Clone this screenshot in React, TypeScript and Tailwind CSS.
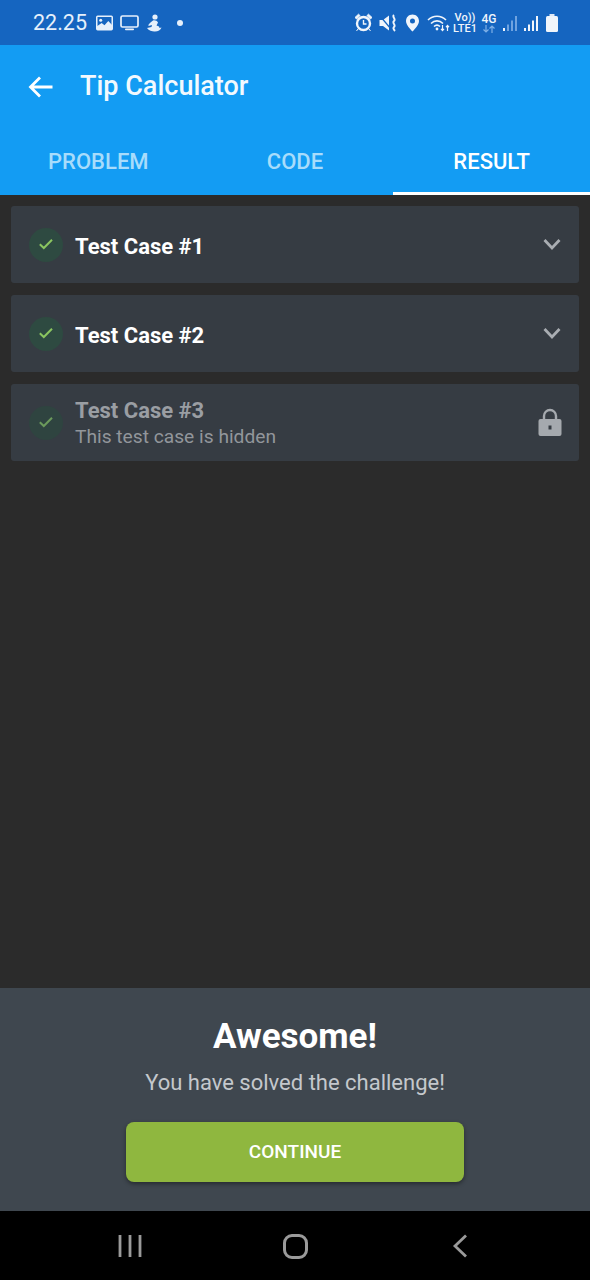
import React from "react";

const font = { fontFamily: "Roboto, sans-serif" };

function Check({ dim }: { dim?: boolean }) {
  return (
    <div className={`flex h-[34px] w-[34px] shrink-0 items-center justify-center rounded-full ${dim ? "bg-[#2f4440]" : "bg-[#2e4a41]"}`}>
      <svg width="16" height="12" viewBox="0 0 16 12" fill="none" className="mb-[2px]">
        <path d="M1.8 6.2 L5.8 10 L14 1.8" stroke={dim ? "#6c9a5c" : "#8bc560"} strokeWidth="2" />
      </svg>
    </div>
  );
}

function Chevron() {
  return (
    <svg width="18" height="13" viewBox="0 0 18 13" fill="none" className="mr-[18px]">
      <path d="M1.5 2 L9 10 L16.5 2" stroke="#a9adb2" strokeWidth="2.8" />
    </svg>
  );
}

function Lock() {
  return (
    <svg width="24" height="28" viewBox="0 0 24 28" className="mr-[17px] mb-[2px]">
      <path d="M6 12 V8 a6 6 0 0 1 12 0 V12" fill="none" stroke="#a5a9ae" strokeWidth="2.4" />
      <rect x="0.5" y="11" width="23" height="17" rx="2" fill="#a5a9ae" />
      <rect x="10.5" y="17.5" width="3" height="4" fill="#363c43" />
    </svg>
  );
}

function TestCard({ title, dim, sub }: { title: string; dim?: boolean; sub?: string }) {
  return (
    <div className="flex h-[77px] items-center justify-between rounded-[3px] bg-[#363c43] pl-[18px]">
      <div className="flex items-center gap-[12px]">
        <Check dim={dim} />
        {sub ? (
          <div className="flex flex-col pt-[1px]">
            <span className="text-[22px] leading-[27px] font-bold text-[#9a9ea3]">{title}</span>
            <span className="text-[19.2px] leading-[25px] text-[#92969b]">{sub}</span>
          </div>
        ) : (
          <span className="pt-[3px] text-[22px] leading-[27px] font-bold text-white">{title}</span>
        )}
      </div>
      {dim ? <Lock /> : <Chevron />}
    </div>
  );
}

function LeftStatusIcons() {
  return (
    <div className="flex items-center">
      <svg width="17" height="16" viewBox="0 0 18 16" className="ml-[9px]">
        <rect x="0.8" y="0.8" width="16.4" height="14.4" rx="1" fill="none" stroke="#e6f0fb" strokeWidth="1.6" />
        <circle cx="5" cy="5" r="1.6" fill="#e6f0fb" />
        <path d="M1 15 V11.5 L6 8 L9 10.5 L13 6 L17 10 V15 Z" fill="#e6f0fb" />
      </svg>
      <svg width="19" height="16" viewBox="0 0 19 16" className="ml-[7px]">
        <rect x="1" y="1" width="17" height="11" rx="1.5" fill="none" stroke="#e6f0fb" strokeWidth="1.7" />
        <rect x="5" y="13.5" width="9" height="1.8" rx="0.8" fill="#e6f0fb" />
      </svg>
      <svg width="16" height="18" viewBox="0 0 16 18" className="ml-[7px]">
        <circle cx="9" cy="3" r="2.6" fill="#e6f0fb" />
        <path d="M7 6.5 C3.5 9 2 10.5 2.5 12 L6 11 L5.5 13 L1 14 C3 17 7 17.6 9 17.4 C12 17.4 14.6 16 15.5 13.5 L13.5 14 L13 12.5 L10.5 11.5 L12 8.5 C11 6.8 9 6 7 6.5 Z" fill="#e6f0fb" />
      </svg>
      <div className="ml-[15px] h-[6px] w-[6px] rounded-full bg-[#e6f0fb]" />
    </div>
  );
}

function RightStatusIcons() {
  return (
    <div className="flex items-center">
      <svg width="19" height="19" viewBox="0 0 19 19">
        <circle cx="9.5" cy="10.5" r="6.5" fill="none" stroke="#f0f5fb" strokeWidth="2.4" />
        <path d="M9.5 7 V11 H12.5" fill="none" stroke="#f0f5fb" strokeWidth="1.4" />
        <path d="M1 4.5 L4.5 1.2 L6 2.6 L2.6 6 Z M18 4.5 L14.5 1.2 L13 2.6 L16.4 6 Z M4 16 L2.5 18 M15 16 L16.5 18" fill="#f0f5fb" stroke="#f0f5fb" strokeWidth="1" />
      </svg>
      <svg width="19" height="18" viewBox="0 0 19 18" className="ml-[6px]">
        <path d="M0.5 6 H4 L10 1.5 V16.5 L4 12 H0.5 Z" fill="#f0f5fb" />
        <path d="M1 2 L12 15" stroke="#1565c0" strokeWidth="1.2" />
        <path d="M15 1 C12.5 3 17.5 5 15 7 C12.5 9 17.5 11 15 13 C13.5 14.5 15 16 16 17" fill="none" stroke="#f0f5fb" strokeWidth="1.9" />
      </svg>
      <svg width="15" height="18" viewBox="0 0 14 18" className="ml-[7px]">
        <path fillRule="evenodd" d="M7 0.5 C3.2 0.5 0.5 3.4 0.5 7 C0.5 11 5 15.5 7 17.5 C9 15.5 13.5 11 13.5 7 C13.5 3.4 10.8 0.5 7 0.5 Z M7 4.5 A2.5 2.5 0 1 1 7 9.5 A2.5 2.5 0 1 1 7 4.5 Z" fill="#f0f5fb" />
      </svg>
      <svg width="24" height="18" viewBox="0 0 24 18" className="ml-[7px]">
        <path d="M1 6 C6 1 14 1 19 6 M4 9.5 C7.5 6 12.5 6 16 9.5 M7 12.5 C8.8 10.8 11.2 10.8 13 12.5" fill="none" stroke="#f0f5fb" strokeWidth="1.6" />
        <circle cx="10" cy="15" r="1.4" fill="#f0f5fb" />
        <path d="M15.5 11 V16.5 M14 14.8 L15.5 16.5 L17 14.8 M20.5 17 V11.5 M19 13.2 L20.5 11.5 L22 13.2" fill="none" stroke="#f0f5fb" strokeWidth="1.2" />
      </svg>
      <div className="ml-[2px] flex w-[24px] flex-col items-center text-[11px] leading-[11px] font-medium text-[#f0f5fb]">
        <span>Vo))</span>
        <span>LTE1</span>
      </div>
      <div className="ml-[4px] flex w-[16px] flex-col items-center text-[12px] leading-[12px] font-medium text-[#f0f5fb]">
        <span>4G</span>
        <svg width="14" height="8" viewBox="0 0 14 8">
          <path d="M4 0 V7 M1.5 4.5 L4 7 L6.5 4.5" fill="none" stroke="#7fb0e6" strokeWidth="1.2" />
          <path d="M10 8 V1 M7.5 3.5 L10 1 L12.5 3.5" fill="none" stroke="#7fb0e6" strokeWidth="1.2" />
        </svg>
      </div>
      <svg width="16" height="16" viewBox="0 0 16 16" className="ml-[6px]">
        <rect x="0" y="13" width="2" height="3" fill="#f0f5fb" />
        <rect x="4" y="9.5" width="2" height="6.5" fill="#6fa3e0" />
        <rect x="8" y="5.5" width="2" height="10.5" fill="#6fa3e0" />
        <rect x="12" y="1" width="2" height="15" fill="#6fa3e0" />
      </svg>
      <svg width="16" height="16" viewBox="0 0 16 16" className="ml-[5px]">
        <rect x="0" y="13" width="2" height="3" fill="#f0f5fb" />
        <rect x="4" y="9.5" width="2" height="6.5" fill="#f0f5fb" />
        <rect x="8" y="5.5" width="2" height="10.5" fill="#f0f5fb" />
        <rect x="12" y="1" width="2" height="15" fill="#f0f5fb" />
      </svg>
      <svg width="12" height="18" viewBox="0 0 12 18" className="ml-[6px]">
        <rect x="3.5" y="0" width="5" height="2" fill="#dfe9f6" />
        <rect x="0" y="2" width="12" height="16" rx="1.5" fill="#f0f5fb" />
      </svg>
    </div>
  );
}

export default function App() {
  return (
    <div className="flex h-[1280px] w-[590px] flex-col overflow-hidden bg-[#2b2b2b]" style={font}>
      <div className="flex h-[45px] items-center justify-between bg-[#1565c0] pr-[32px] pl-[33px]">
        <div className="flex items-center">
          <span className="text-[21.5px] leading-none text-[#e6f0fb]">22.25</span>
          <LeftStatusIcons />
        </div>
        <RightStatusIcons />
      </div>

      <div className="flex h-[150px] flex-col bg-[#139cf3]">
        <div className="flex h-[83px] items-center pl-[28px]">
          <svg width="26" height="24" viewBox="0 0 26 24" fill="none">
            <path d="M24.5 12 H3 M12 2.5 L2.5 12 L12 21.5" stroke="white" strokeWidth="2.8" />
          </svg>
          <span className="ml-[26px] text-[27px] leading-none font-medium text-[#f2f9fe]">Tip Calculator</span>
        </div>
        <div className="grid flex-1 grid-cols-3 text-center text-[22px] font-medium">
          <div className="flex items-center justify-center text-[#a8dcfb]">PROBLEM</div>
          <div className="flex items-center justify-center text-[#a8dcfb]">CODE</div>
          <div className="flex items-center justify-center border-b-[3px] border-white pt-[3px] text-white">RESULT</div>
        </div>
      </div>

      <div className="flex flex-1 flex-col gap-[12px] px-[11px] pt-[11px]">
        <TestCard title="Test Case #1" />
        <TestCard title="Test Case #2" />
        <TestCard title="Test Case #3" dim sub="This test case is hidden" />
      </div>

      <div className="flex h-[223px] flex-col items-center bg-[#3f474f]">
        <h1 className="mt-[27px] text-[35px] leading-[44px] font-bold text-white">Awesome!</h1>
        <p className="mt-[10px] text-[22px] leading-[28px] text-[#c4c8cc]">You have solved the challenge!</p>
        <button className="mt-[25px] flex h-[60px] w-[338px] items-center justify-center rounded-[8px] bg-[#8fb73f] pt-[1px] text-[19px] font-medium text-white shadow-[0_2px_4px_rgba(0,0,0,0.4)]">
          CONTINUE
        </button>
      </div>

      <div className="flex h-[69px] items-center justify-center bg-black">
        <div className="grid w-[495px] grid-cols-3 pt-[2px]">
          <div className="flex justify-center">
            <svg width="24" height="24" viewBox="0 0 24 24" stroke="#9a9a9a" strokeWidth="2.8"><path d="M2 1 V23 M12 1 V23 M22 1 V23" /></svg>
          </div>
          <div className="flex justify-center">
            <div className="h-[25px] w-[25px] rounded-[9px] border-[3px] border-[#9a9a9a]" />
          </div>
          <div className="flex justify-center">
            <svg width="16" height="24" viewBox="0 0 16 24" fill="none" stroke="#9a9a9a" strokeWidth="2.8"><path d="M14 1.5 L3 12 L14 22.5" /></svg>
          </div>
        </div>
      </div>
    </div>
  );
}
